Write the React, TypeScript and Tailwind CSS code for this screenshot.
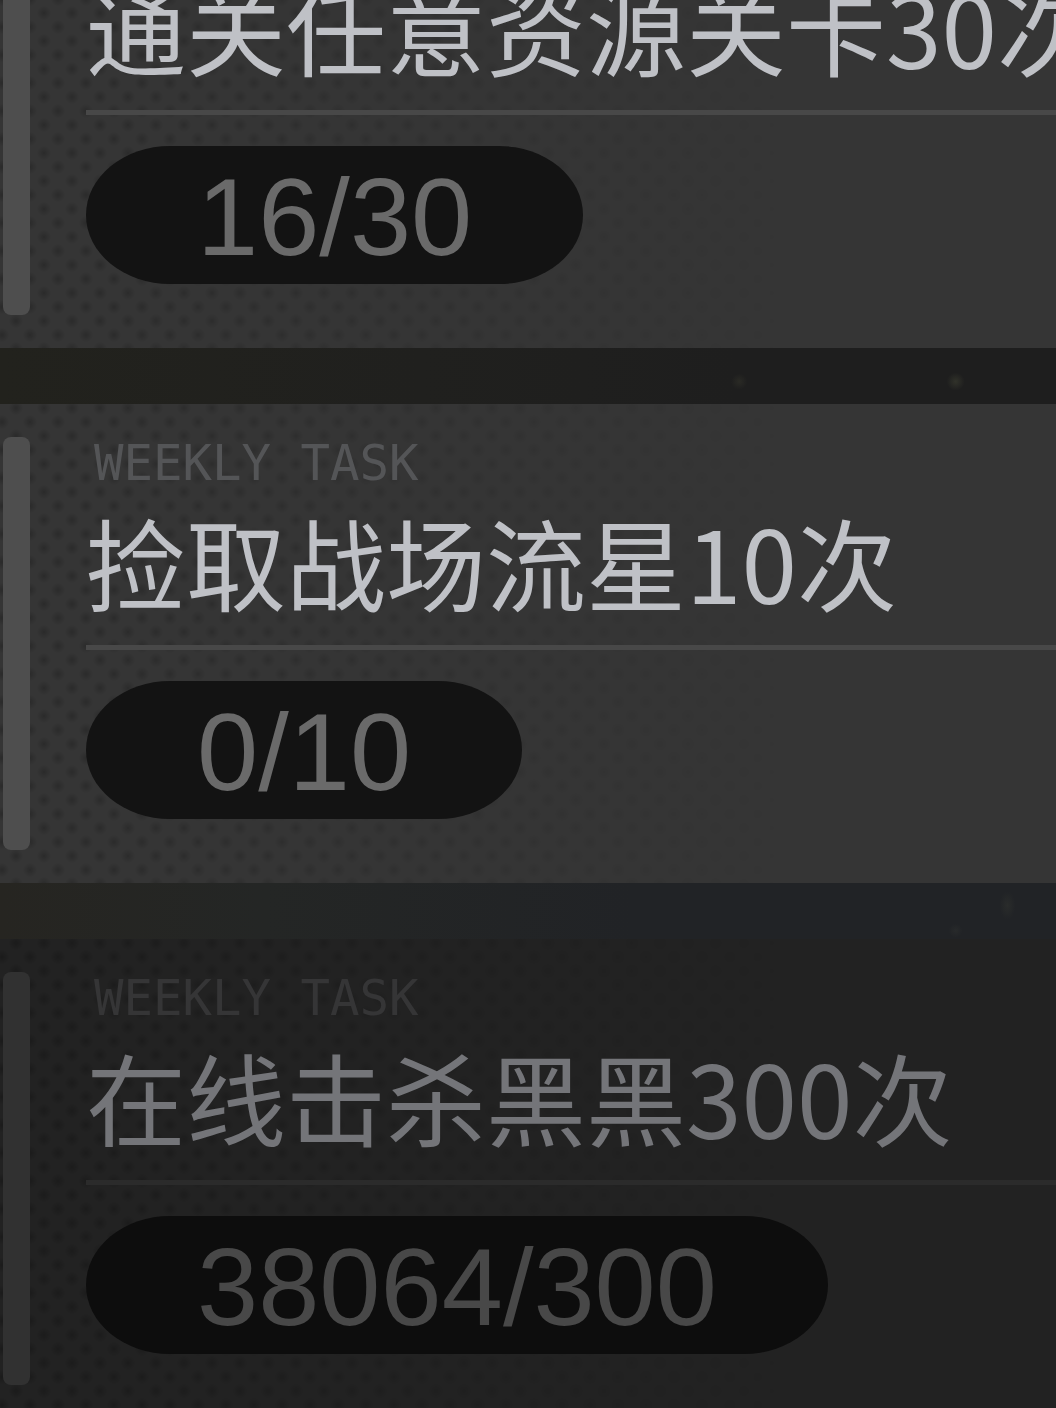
type Task = {
  title: string;
  progress: string;
  done?: boolean;
};

const tasks: Task[] = [
  { title: "通关任意资源关卡30次", progress: "16/30" },
  { title: "捡取战场流星10次", progress: "0/10" },
  { title: "在线击杀黑黑300次", progress: "38064/300", done: true },
];

function TaskCard({ title, progress, done }: Task) {
  return (
    <article
      className={`relative flex gap-14 overflow-hidden py-[33px] pl-[3px] ${
        done ? "bg-[#222222]" : "bg-[#353535]"
      }`}
    >
      <div
        aria-hidden="true"
        className="absolute inset-0 bg-[radial-gradient(circle_at_7px_7px,#000_0px,transparent_7px),radial-gradient(circle_at_21px_21px,#000_0px,transparent_7px)] bg-size-[28px_28px] bg-position-[-5px_11px] opacity-20 mask-r-from-0% mask-r-to-75%"
      />
      <div
        aria-hidden="true"
        className={`relative w-[27px] shrink-0 rounded-lg ${done ? "bg-[#313131]" : "bg-[#4e4e4e]"}`}
      />
      <div className="relative min-w-0 flex-1 pb-[31px]">
        <p
          className={`pl-2 font-['DejaVu_Sans_Mono',monospace] text-[49px] leading-[54px] whitespace-nowrap ${
            done ? "text-[#353536]" : "text-[#545557]"
          }`}
        >
          WEEKLY TASK
        </p>
        <h2
          className={`mt-[10px] font-['Noto_Sans_CJK_SC',sans-serif] text-[100px] leading-[120px] font-normal whitespace-nowrap ${
            done ? "text-[#747579]" : "text-[#bfc1c6]"
          }`}
        >
          {title}
        </h2>
        <div className={`mt-6 h-[5px] ${done ? "bg-[#2b2b2b]" : "bg-[#484848]"}`} />
        <p
          className={`mt-[31px] w-fit rounded-[84px/69px] px-[111px] pt-1 font-['Liberation_Sans',sans-serif] text-[110px] leading-[134px] whitespace-nowrap ${
            done ? "bg-[#0d0d0d] text-[#484848]" : "bg-[#131313] text-[#6a6a6a]"
          }`}
        >
          {progress}
        </p>
      </div>
    </article>
  );
}

export default function App() {
  return (
    <main className="h-screen overflow-hidden bg-[#1f1f1f]">
      <ul className="-mt-[131px]">
        <li>
          <TaskCard {...tasks[0]} />
        </li>
        <li
          aria-hidden="true"
          className="h-14 bg-[radial-gradient(circle_at_70%_60%,#2a2a25_0px,transparent_8px),radial-gradient(circle_at_90.5%_60%,#31322a_0px,transparent_9px),linear-gradient(to_right,#22221d,#20201e_40%,#1e1e1e_70%)]"
        />
        <li>
          <TaskCard {...tasks[1]} />
        </li>
        <li
          aria-hidden="true"
          className="h-14 bg-[radial-gradient(ellipse_8px_14px_at_95.4%_40%,#2a2c2b_0px,transparent_100%),radial-gradient(circle_at_90.5%_85%,#282a2b_0px,transparent_7px),linear-gradient(to_right,#262521,#242625_25%,#212326_60%)]"
        />
        <li>
          <TaskCard {...tasks[2]} />
        </li>
      </ul>
    </main>
  );
}
